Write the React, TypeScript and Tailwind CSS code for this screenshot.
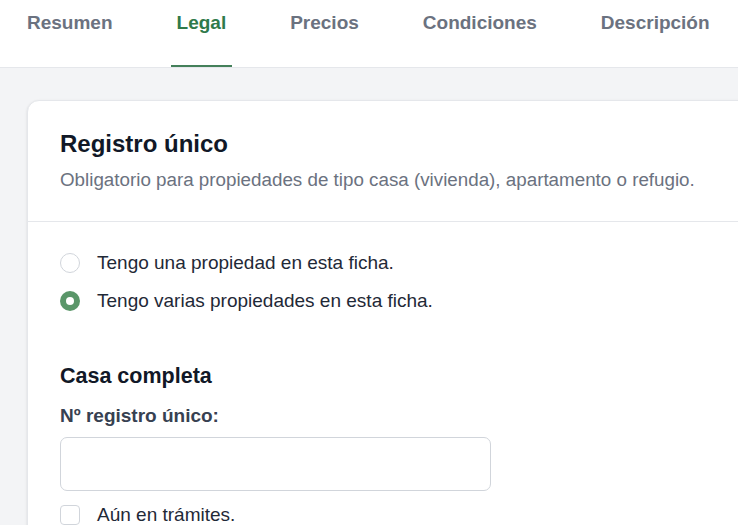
import React from "react";

const tabs = ["Resumen", "Legal", "Precios", "Condiciones", "Descripción"];

export default function App() {
  return (
    <div
      className="h-[525px] w-[738px] overflow-hidden bg-[#f3f4f6]"
      style={{ fontFamily: '"Liberation Sans", Arial, sans-serif' }}
    >
      <div className="flex h-[68px] gap-[52px] border-b border-[#e5e7eb] bg-white pl-[21px]">
        {tabs.map((t) => (
          <div
            key={t}
            className={
              t === "Legal"
                ? "flex h-full items-start border-b-2 border-[#44805a] px-[6px] pt-[9px] text-[19px] font-bold text-[#2f7a4b]"
                : "flex h-full items-start border-b-2 border-transparent px-[6px] pt-[9px] text-[19px] font-bold text-[#6b7280]"
            }
          >
            {t}
          </div>
        ))}
      </div>
      <div className="pl-[27px] pt-[32px]">
        <div className="min-h-[500px] w-[760px] rounded-[12px] border border-[#e5e7eb] bg-white shadow-sm">
          <div className="border-b border-[#e5e7eb] px-[32px] pb-[28px] pt-[27px]">
            <h2 className="text-[24px] font-bold leading-[32px] text-[#111827]">Registro único</h2>
            <p className="mt-[7px] text-[18.8px] leading-[26px] text-[#6b7280]">
              Obligatorio para propiedades de tipo casa (vivienda), apartamento o refugio.
            </p>
          </div>
          <div className="px-[32px] pt-[31px]">
            <div className="flex flex-col gap-[18px]">
              <label className="flex items-center gap-[17px] text-[19px] leading-[20px] text-[#1f2937]">
                <span className="h-[20px] w-[20px] rounded-full border border-[#d1d5db] bg-white" />
                Tengo una propiedad en esta ficha.
              </label>
              <label className="flex items-center gap-[17px] text-[19px] leading-[20px] text-[#1f2937]">
                <span className="flex h-[20px] w-[20px] items-center justify-center rounded-full bg-[#5a9669]">
                  <span className="h-[8px] w-[8px] rounded-full bg-white" />
                </span>
                Tengo varias propiedades en esta ficha.
              </label>
            </div>
            <h3 className="mt-[51px] text-[21.5px] font-bold leading-[28px] text-[#111827]">Casa completa</h3>
            <div className="mt-[14px] text-[19px] font-bold leading-[24px] text-[#374151]">Nº registro único:</div>
            <div className="mt-[9px] h-[54px] w-[431px] rounded-[7px] border border-[#d1d5db] bg-white" />
            <label className="mt-[14px] flex items-center gap-[17px] text-[19px] leading-[20px] text-[#1f2937]">
              <span className="h-[20px] w-[20px] rounded-[4px] border border-[#d1d5db] bg-white" />
              Aún en trámites.
            </label>
          </div>
        </div>
      </div>
    </div>
  );
}
